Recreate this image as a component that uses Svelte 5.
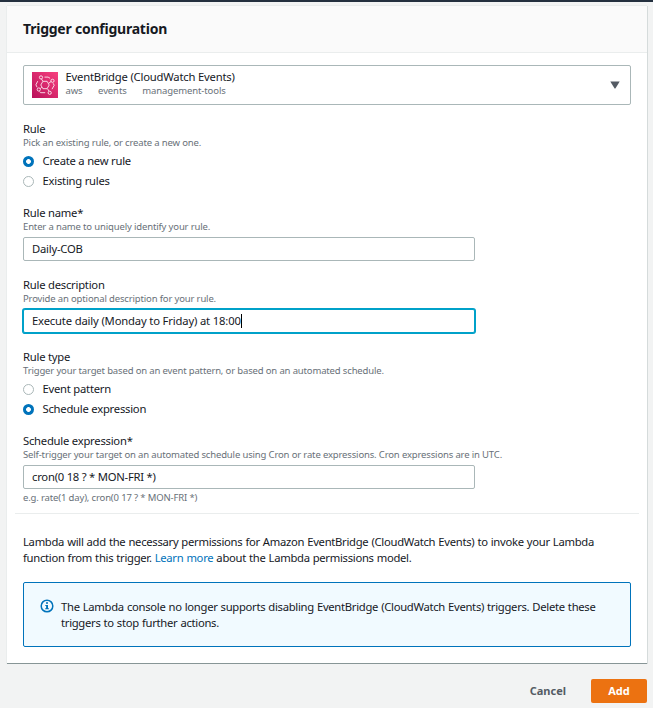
<script>
  let ruleMode = $state('new');
  let ruleType = $state('schedule');
  let name = $state('Daily-COB');
  let description = $state('Execute daily (Monday to Friday) at 18:00');
  let schedule = $state('cron(0 18 ? * MON-FRI *)');
</script>

<div class="page">
  <section class="panel">
    <header><h2>Trigger configuration</h2></header>
    <div class="body">
      <div class="select">
        <svg class="logo" viewBox="0 0 26 26" width="26" height="26">
          <defs><linearGradient id="pink" x1="0" y1="1" x2="1" y2="0"><stop offset="0" stop-color="#b8105a" /><stop offset="1" stop-color="#f8417f" /></linearGradient></defs>
          <rect width="26" height="26" fill="url(#pink)" />
          <g fill="none" stroke="#fff" stroke-width="0.9" opacity="0.9">
            <path d="M10.900 9.300h4.200l2.100 3.700-2.100 3.700h-4.200L8.800 13z" />
            <circle cx="9" cy="5.400" r="1.600" /><circle cx="20.500" cy="8.800" r="1.600" />
            <circle cx="17.700" cy="20.800" r="1.600" /><circle cx="6.800" cy="17.500" r="1.600" />
            <path d="M9.500 7l1.300 2.200M19 9.600l-2.400 1.700M17 19.200l-1.500-2.500M8.200 16.600l1.600-1.300M12.500 5.100h3.600l2 1.200M21.200 11.300l1 2-2.200 3.900M5.700 9.200l-1.800 3.600 1.200 2.500M7.700 19.500l.8 1.200h4.700" />
          </g>
        </svg>
        <div class="service">
          <div>EventBridge (CloudWatch Events)</div>
          <div class="tags"><span>aws</span><span>events</span><span>management-tools</span></div>
        </div>
        <svg class="arrow" viewBox="0 0 10 8" width="10" height="8"><path d="M.3.5h9.400L5.400 7.500h-.8z" fill="#545b64" /></svg>
      </div>

      <div class="field radios">
        <div class="label">Rule</div>
        <div class="hint">Pick an existing rule, or create a new one.</div>
        <label><input type="radio" bind:group={ruleMode} value="new" /><span>Create a new rule</span></label>
        <label><input type="radio" bind:group={ruleMode} value="existing" /><span>Existing rules</span></label>
      </div>

      <div class="field">
        <div class="label">Rule name*</div>
        <div class="hint">Enter a name to uniquely identify your rule.</div>
        <input class="text" type="text" bind:value={name} />
      </div>

      <div class="field">
        <div class="label">Rule description</div>
        <div class="hint">Provide an optional description for your rule.</div>
        <div class="text active"><span>{description}</span><i class="caret"></i></div>
      </div>

      <div class="field radios">
        <div class="label">Rule type</div>
        <div class="hint">Trigger your target based on an event pattern, or based on an automated schedule.</div>
        <label><input type="radio" bind:group={ruleType} value="pattern" /><span>Event pattern</span></label>
        <label><input type="radio" bind:group={ruleType} value="schedule" /><span>Schedule expression</span></label>
      </div>

      <div class="field last">
        <div class="label">Schedule expression*</div>
        <div class="hint">Self-trigger your target on an automated schedule using Cron or rate expressions. Cron expressions are in UTC.</div>
        <input class="text" type="text" bind:value={schedule} />
        <div class="hint example">e.g. rate(1 day), cron(0 17 ? * MON-FRI *)</div>
      </div>

      <hr />

      <p class="note">Lambda will add the necessary permissions for Amazon EventBridge (CloudWatch Events) to invoke your Lambda<br />function from this trigger. <a href="#learn">Learn more</a> about the Lambda permissions model.</p>

      <div class="alert">
        <svg viewBox="0 0 14 14" width="14" height="14"><circle cx="7" cy="7" r="5.800" fill="none" stroke="#0073bb" stroke-width="1.500" /><path d="M6 3.300h2v1.500H6zM5.300 5.900H8v3.300h.9v1.100H5.200V9.200h.9V7h-.8z" fill="#0073bb" /></svg>
        <p>The Lambda console no longer supports disabling EventBridge (CloudWatch Events) triggers. Delete these<br />triggers to stop further actions.</p>
      </div>
    </div>
  </section>
  <footer>
    <button class="cancel">Cancel</button>
    <button class="add">Add</button>
  </footer>
</div>

<style>
  :global(body) { margin: 0; background: #f2f3f3; }
  .page {
    box-sizing: border-box; width: 653px; height: 708px; overflow: hidden;
    padding: 3px 6px 0 7px; border-top: 2px solid #232f3e; background: #f2f3f3;
    font: 11.25px/16px "Noto Sans", sans-serif; letter-spacing: -0.235px; color: #16191f;
  }
  .panel {
    box-sizing: border-box; height: 658px; width: 640px; background: #fff;
    border-top: 1px solid #eaeded;
    box-shadow: 0 1px 0 0 #879596, 1px 1px 0 0 #d5dbdb, -1px 1px 0 0 #eaeded;
  }
  header { box-sizing: border-box; height: 47px; padding: 12px 16px 11px; background: #fafafa; border-bottom: 1px solid #eaeded; }
  h2 { margin: 0; font: 700 14px/22px "Noto Sans", sans-serif; letter-spacing: -0.23px; }
  .body { padding: 12px 16px 0; }
  .select {
    box-sizing: border-box; height: 40px; padding: 0 10px 0 8px; margin-bottom: 16px;
    display: flex; align-items: center; border: 1px solid #aab7b8; border-radius: 2px;
  }
  .logo { margin-right: 7.500px; }
  .service { flex: 1; line-height: 14px; margin-top: -3px; letter-spacing: -0.2px; }
  .tags { display: flex; gap: 15.500px; font-size: 9.5px; line-height: 13px; color: #687078; letter-spacing: -0.1px; }
  .field { margin-bottom: 16px; }
  .label { height: 16px; line-height: 16px; }
  .radios { margin-bottom: 14px; }
  .hint { font-size: 9.5px; line-height: 12px; color: #687078; letter-spacing: -0.15px; white-space: nowrap; }
  .radios .hint { margin-bottom: 2px; }
  label { display: flex; align-items: center; height: 20px; }
  label span { line-height: 16px; }
  input[type="radio"] {
    appearance: none; box-sizing: border-box; width: 11px; height: 11px; margin: 0 8.500px 0 0;
    border: 1px solid #aab7b8; border-radius: 50%; background: #fff;
  }
  input[type="radio"]:checked { border: 0; background: radial-gradient(circle, #fff 0 2px, #0073bb 2.800px); }
  .text {
    display: flex; align-items: center; box-sizing: border-box; width: 452px; height: 24px; margin-top: 4px; padding: 0 8px 1px;
    border: 1px solid #aab7b8; border-radius: 2px; background: #fff;
    font: inherit; letter-spacing: inherit; color: inherit; outline: 0;
  }
  .active { padding-bottom: 0; border-color: #00a1c9; box-shadow: 0 0 0 1px #00a1c9; letter-spacing: -0.165px; }
  .caret { width: 1px; height: 14px; background: #000; }
  .last { margin-bottom: 0; }
  .example { margin-top: 3px; }
  hr { height: 1px; margin: 9px -8px 20px; border: 0; background: #eaeded; }
  p { margin: 0; white-space: nowrap; word-spacing: 0.4px; letter-spacing: -0.29px; }
  a { color: #0073bb; text-decoration: none; }
  .note + .alert { margin-top: 16px; }
  .alert {
    box-sizing: border-box; height: 65px; padding: 16px;
    display: flex; gap: 7px; border: 1px solid #0073bb; border-radius: 2px; background: #f1faff;
  }
  .alert svg { flex: none; }
  footer { display: flex; justify-content: flex-end; gap: 8px; margin-top: 16px; }
  button { height: 24px; border: 0; border-radius: 2px; padding: 0 17px; font: 700 11px/24px "Noto Sans", sans-serif; }
  .cancel { background: transparent; color: #545b64; }
  .add { width: 56px; background: #ec7211; color: #fff; }
</style>
